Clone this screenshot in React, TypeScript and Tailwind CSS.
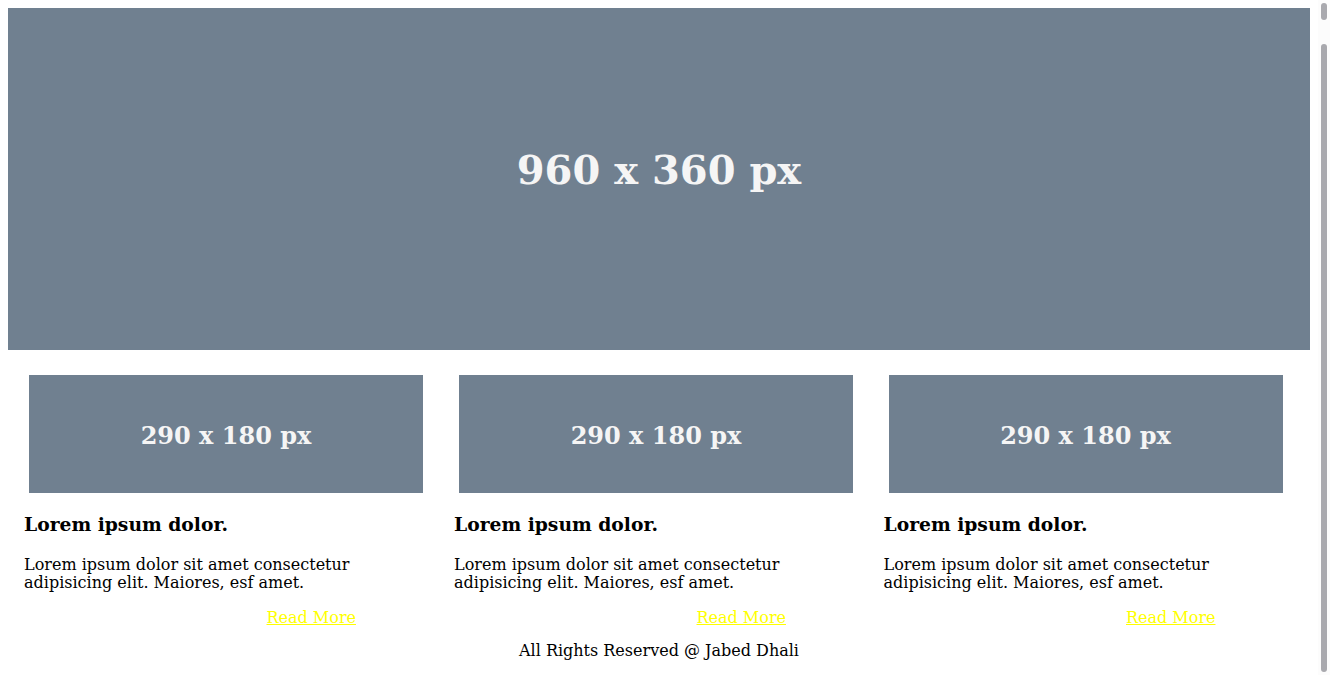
import React from "react";

const cards = [0, 1, 2];

export default function App() {
  return (
    <div className="h-[675px] overflow-hidden flex bg-white">
      <div className="flex-1 min-w-0 text-black p-2" style={{ fontFamily: '"DejaVu Serif", serif' }}>
        <div className="h-[342px] bg-[#708090] flex items-center justify-center pb-[18px]">
          <span className="text-[40px] font-bold text-[#f5f5f5]">960 x 360 px</span>
        </div>
        <div className="grid grid-cols-[430px_429.5px_430px] pl-4 mt-[25px]">
          {cards.map((i) => (
            <div key={i} className="flex flex-col">
              <div className="ml-[5px] w-[394px] h-[118px] bg-[#708090] flex items-center justify-center pt-[3px]">
                <span className="text-[24px] font-bold text-[#f5f5f5]">290 x 180 px</span>
              </div>
              <h3 className="text-[18.72px] font-bold mt-[18px] leading-[26px]">Lorem ipsum dolor.</h3>
              <p className="text-[16px] mt-[19px] leading-[18px] w-[340px]">
                Lorem ipsum dolor sit amet consectetur adipisicing elit. Maiores, esf amet.
              </p>
              <div className="w-[332px] text-right mt-[17px] text-[16px] leading-[18px]">
                <a href="#" className="text-[#ffff00] underline">Read More</a>
              </div>
            </div>
          ))}
        </div>
        <p className="text-center text-[16px] mt-[15px] leading-[18px]">All Rights Reserved @ Jabed Dhali</p>
      </div>
      <div className="w-[12px] shrink-0 bg-[#fcfcfc] flex flex-col items-center pt-[3px]">
        <div className="w-[6px] h-[17px] rounded-full bg-[#a9a9ae]" />
        <div className="w-[6px] h-[628px] mt-[24px] rounded-full bg-[#a9a9ae]" />
      </div>
    </div>
  );
}
